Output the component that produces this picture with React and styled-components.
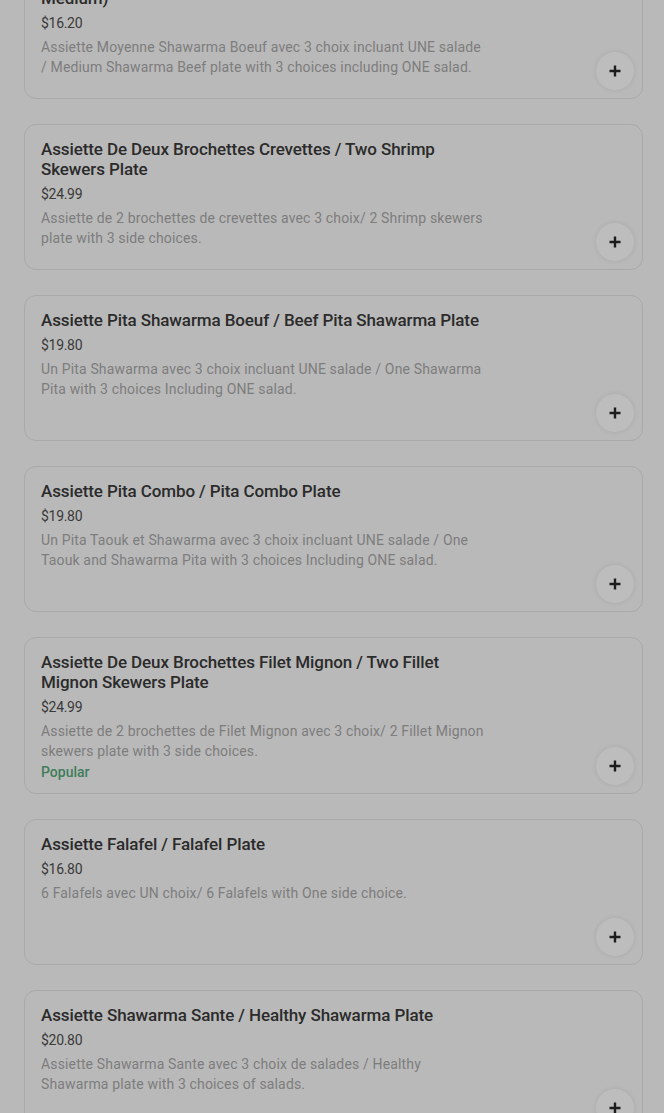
import React from 'react';
import styled, { createGlobalStyle } from 'styled-components';

const GlobalStyle = createGlobalStyle`
    html, body {
        margin: 0;
        padding: 0;
        background: #b9b9b9;
        overflow: hidden;
    }
    * {
        box-sizing: border-box;
    }
`;

const Page = styled.div`
    width: 664px;
    height: 1113px;
    overflow: hidden;
    background: #b9b9b9;
    font-family: Roboto, "Liberation Sans", sans-serif;
`;

const List = styled.div`
    display: flex;
    flex-direction: column;
    gap: 25px;
    padding: 0 21px 0 24px;
    margin-top: -47px;
`;

const Card = styled.div`
    position: relative;
    min-height: 146px;
    border: 1px solid #a9a9a9;
    border-radius: 12px;
    padding: 14px 16px 10px 16px;
    background: #b9b9b9;
`;

const Info = styled.div`
    max-width: 443px;
    display: flex;
    flex-direction: column;
`;

const Title = styled.div`
    font-size: 17px;
    font-weight: 500;
    line-height: 20px;
    letter-spacing: -0.1px;
    color: #2b2b2b;
    margin-bottom: 5px;
`;

const Price = styled.div`
    font-size: 14px;
    line-height: 20px;
    letter-spacing: -0.3px;
    color: #3a3a3a;
    margin-bottom: 4px;
`;

const Description = styled.div`
    font-size: 14px;
    line-height: 20px;
    letter-spacing: 0.15px;
    color: #7d7d7d;
    display: -webkit-box;
    -webkit-line-clamp: 2;
    -webkit-box-orient: vertical;
    overflow: hidden;
`;

const Badge = styled.div`
    font-size: 14px;
    font-weight: 500;
    line-height: 22px;
    color: #3f7d5b;
`;

const AddButton = styled.button`
    position: absolute;
    right: 8px;
    bottom: 8px;
    width: 38px;
    height: 38px;
    border-radius: 50%;
    border: none;
    padding: 0;
    background: #bdbdbd;
    box-shadow: 0 0 5px rgba(0, 0, 0, 0.09);
    display: flex;
    align-items: center;
    justify-content: center;
    cursor: pointer;
`;

const PlusIcon = () => (
    <svg width="12" height="12" viewBox="0 0 12 12">
        <path d="M6 0.5v11M0.5 6h11" stroke="#1c1c1c" strokeWidth="2.4" />
    </svg>
);

const items = [
    {
        title: 'Assiette Shawarma Boeuf / Beef Shawarma Plate (Moyen-Medium)',
        price: '$16.20',
        description: 'Assiette Moyenne Shawarma Boeuf avec 3 choix incluant UNE salade / Medium Shawarma Beef plate with 3 choices including ONE salad.'
    },
    {
        title: 'Assiette De Deux Brochettes Crevettes / Two Shrimp Skewers Plate',
        price: '$24.99',
        description: 'Assiette de 2 brochettes de crevettes avec 3 choix/ 2 Shrimp skewers plate with 3 side choices.'
    },
    {
        title: 'Assiette Pita Shawarma Boeuf / Beef Pita Shawarma Plate',
        price: '$19.80',
        description: 'Un Pita Shawarma avec 3 choix incluant UNE salade / One Shawarma Pita with 3 choices Including ONE salad.'
    },
    {
        title: 'Assiette Pita Combo / Pita Combo Plate',
        price: '$19.80',
        description: 'Un Pita Taouk et Shawarma avec 3 choix incluant UNE salade / One Taouk and Shawarma Pita with 3 choices Including ONE salad.'
    },
    {
        title: 'Assiette De Deux Brochettes Filet Mignon / Two Fillet Mignon Skewers Plate',
        price: '$24.99',
        description: 'Assiette de 2 brochettes de Filet Mignon avec 3 choix/ 2 Fillet Mignon skewers plate with 3 side choices.',
        popular: true
    },
    {
        title: 'Assiette Falafel / Falafel Plate',
        price: '$16.80',
        description: '6 Falafels avec UN choix/ 6 Falafels with One side choice.'
    },
    {
        title: 'Assiette Shawarma Sante / Healthy Shawarma Plate',
        price: '$20.80',
        description: 'Assiette Shawarma Sante avec 3 choix de salades / Healthy Shawarma plate with 3 choices of salads.'
    }
];

const MenuItem = ({ title, price, description, popular }) => (
    <Card>
        <Info>
            <Title>{title}</Title>
            <Price>{price}</Price>
            <Description>{description}</Description>
            {popular && <Badge>Popular</Badge>}
        </Info>
        <AddButton aria-label="Add">
            <PlusIcon />
        </AddButton>
    </Card>
);

const App = () => (
    <Page>
        <GlobalStyle />
        <List>
            {items.map((item) => (
                <MenuItem key={item.title} {...item} />
            ))}
        </List>
    </Page>
);

export default App;
